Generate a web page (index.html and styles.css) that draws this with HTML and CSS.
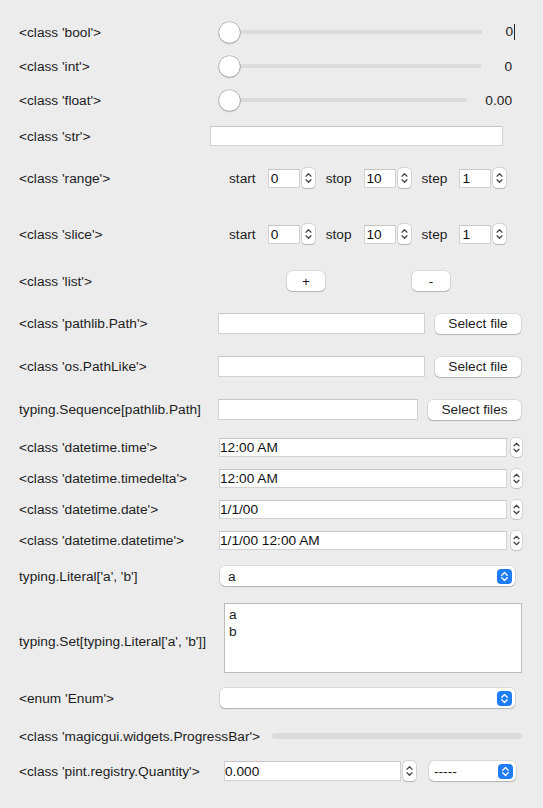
FILE: index.html
```html
<!DOCTYPE html>
<html>
<head>
<meta charset="utf-8">
<title>magicgui widgets</title>
<link rel="stylesheet" href="styles.css">
</head>
<body>
<main class="form">
  <section class="group sliders">
    <div class="row h22">
      <span class="label">&lt;class 'bool'&gt;</span>
      <div class="slider">
        <div class="track"><span class="knob"></span></div>
        <span class="value">0<i class="caret"></i></span>
      </div>
    </div>
    <div class="row h22">
      <span class="label">&lt;class 'int'&gt;</span>
      <div class="slider">
        <div class="track"><span class="knob"></span></div>
        <span class="value">0</span>
      </div>
    </div>
    <div class="row h22">
      <span class="label">&lt;class 'float'&gt;</span>
      <div class="slider">
        <div class="track"><span class="knob"></span></div>
        <span class="value wide">0.00</span>
      </div>
    </div>
    <div class="row m-str">
      <span class="label">&lt;class 'str'&gt;</span>
      <span class="field str"></span>
    </div>
  </section>

  <div class="row m-range">
    <span class="label">&lt;class 'range'&gt;</span>
    <div class="spins">
      <span class="pname">start</span><span class="field spin">0</span><span class="stepper"><svg width="13" height="20" viewBox="0 0 13 20"><path d="M4 8.2 L6.5 5.7 L9 8.2 M4 11.8 L6.5 14.3 L9 11.8"/></svg></span>
      <span class="pname">stop</span><span class="field spin">10</span><span class="stepper"><svg width="13" height="20" viewBox="0 0 13 20"><path d="M4 8.2 L6.5 5.7 L9 8.2 M4 11.8 L6.5 14.3 L9 11.8"/></svg></span>
      <span class="pname">step</span><span class="field spin">1</span><span class="stepper"><svg width="13" height="20" viewBox="0 0 13 20"><path d="M4 8.2 L6.5 5.7 L9 8.2 M4 11.8 L6.5 14.3 L9 11.8"/></svg></span>
    </div>
  </div>

  <div class="row m-slice">
    <span class="label">&lt;class 'slice'&gt;</span>
    <div class="spins">
      <span class="pname">start</span><span class="field spin">0</span><span class="stepper"><svg width="13" height="20" viewBox="0 0 13 20"><path d="M4 8.2 L6.5 5.7 L9 8.2 M4 11.8 L6.5 14.3 L9 11.8"/></svg></span>
      <span class="pname">stop</span><span class="field spin">10</span><span class="stepper"><svg width="13" height="20" viewBox="0 0 13 20"><path d="M4 8.2 L6.5 5.7 L9 8.2 M4 11.8 L6.5 14.3 L9 11.8"/></svg></span>
      <span class="pname">step</span><span class="field spin">1</span><span class="stepper"><svg width="13" height="20" viewBox="0 0 13 20"><path d="M4 8.2 L6.5 5.7 L9 8.2 M4 11.8 L6.5 14.3 L9 11.8"/></svg></span>
    </div>
  </div>

  <div class="row m-list">
    <span class="label">&lt;class 'list'&gt;</span>
    <div class="listbtns">
      <button class="btn small">+</button>
      <button class="btn small">-</button>
    </div>
  </div>

  <div class="row h21 m-path1">
    <span class="label">&lt;class 'pathlib.Path'&gt;</span>
    <span class="field path"></span>
    <button class="btn file">Select file</button>
  </div>
  <div class="row h21 m-path2">
    <span class="label">&lt;class 'os.PathLike'&gt;</span>
    <span class="field path"></span>
    <button class="btn file">Select file</button>
  </div>
  <div class="row h21 m-path3">
    <span class="label">typing.Sequence[pathlib.Path]</span>
    <span class="field path seq"></span>
    <button class="btn file files">Select files</button>
  </div>

  <section class="group dates">
    <div class="row h19">
      <span class="label">&lt;class 'datetime.time'&gt;</span>
      <span class="field dt">12:00 AM</span>
      <span class="stepper thin"><svg width="11" height="19" viewBox="0 0 11 19"><path d="M3 7.8 L5.5 5.3 L8 7.8 M3 11.2 L5.5 13.7 L8 11.2"/></svg></span>
    </div>
    <div class="row h19">
      <span class="label">&lt;class 'datetime.timedelta'&gt;</span>
      <span class="field dt">12:00 AM</span>
      <span class="stepper thin"><svg width="11" height="19" viewBox="0 0 11 19"><path d="M3 7.8 L5.5 5.3 L8 7.8 M3 11.2 L5.5 13.7 L8 11.2"/></svg></span>
    </div>
    <div class="row h19">
      <span class="label">&lt;class 'datetime.date'&gt;</span>
      <span class="field dt">1/1/00</span>
      <span class="stepper thin"><svg width="11" height="19" viewBox="0 0 11 19"><path d="M3 7.8 L5.5 5.3 L8 7.8 M3 11.2 L5.5 13.7 L8 11.2"/></svg></span>
    </div>
    <div class="row h19">
      <span class="label">&lt;class 'datetime.datetime'&gt;</span>
      <span class="field dt">1/1/00 12:00 AM</span>
      <span class="stepper thin"><svg width="11" height="19" viewBox="0 0 11 19"><path d="M3 7.8 L5.5 5.3 L8 7.8 M3 11.2 L5.5 13.7 L8 11.2"/></svg></span>
    </div>
  </section>

  <div class="row m-literal">
    <span class="label">typing.Literal['a', 'b']</span>
    <div class="combo wide">
      <span class="ctext">a</span>
      <svg class="cbtn" width="15" height="15" viewBox="0 0 15 15"><rect width="15" height="15" rx="4"/><path d="M4.8 6.2 L7.5 3.6 L10.2 6.2 M4.8 8.8 L7.5 11.4 L10.2 8.8"/></svg>
    </div>
  </div>

  <div class="row m-set">
    <span class="label setlabel">typing.Set[typing.Literal['a', 'b']]</span>
    <div class="listbox">
      <div class="item">a</div>
      <div class="item">b</div>
    </div>
  </div>

  <div class="row m-enum">
    <span class="label">&lt;enum 'Enum'&gt;</span>
    <div class="combo wide">
      <span class="ctext"></span>
      <svg class="cbtn" width="15" height="15" viewBox="0 0 15 15"><rect width="15" height="15" rx="4"/><path d="M4.8 6.2 L7.5 3.6 L10.2 6.2 M4.8 8.8 L7.5 11.4 L10.2 8.8"/></svg>
    </div>
  </div>

  <div class="row m-progress">
    <span class="label auto">&lt;class 'magicgui.widgets.ProgressBar'&gt;</span>
    <div class="progress"></div>
  </div>

  <div class="row m-qty">
    <span class="label">&lt;class 'pint.registry.Quantity'&gt;</span>
    <span class="field qty">0.000</span>
    <span class="stepper"><svg width="13" height="20" viewBox="0 0 13 20"><path d="M4 8.2 L6.5 5.7 L9 8.2 M4 11.8 L6.5 14.3 L9 11.8"/></svg></span>
    <div class="combo unit">
      <span class="ctext">-----</span>
      <svg class="cbtn" width="15" height="15" viewBox="0 0 15 15"><rect width="15" height="15" rx="4"/><path d="M4.8 6.2 L7.5 3.6 L10.2 6.2 M4.8 8.8 L7.5 11.4 L10.2 8.8"/></svg>
    </div>
  </div>
</main>
</body>
</html>
```

FILE: styles.css
```css
html, body {
  margin: 0;
  padding: 0;
}
body {
  background: #ececec;
  font-family: "Liberation Sans", Arial, sans-serif;
  font-size: 13.7px;
  color: #1c1c1c;
  width: 543px;
  height: 808px;
  overflow: hidden;
}
.form {
  display: flex;
  flex-direction: column;
  padding: 21px 21px 0 19px;
}
.group {
  display: flex;
  flex-direction: column;
}
.group.sliders { gap: 12px; }
.group.dates { gap: 12px; margin-top: 18px; }

.row {
  display: flex;
  align-items: center;
  height: 20px;
}
.row.h22 { height: 22px; }
.row.h21 { height: 21px; }
.row.h19 { height: 19px; }
.label {
  width: 191px;
  flex: none;
  white-space: nowrap;
}
.label.auto { width: auto; }

.m-str { margin-top: 3px; }
.m-range { margin-top: 22px; }
.m-slice { margin-top: 36px; }
.m-list { margin-top: 27px; }
.m-path1 { margin-top: 22px; }
.m-path2 { margin-top: 22px; }
.m-path3 { margin-top: 22px; }
.m-literal { margin-top: 16px; }
.m-set { margin-top: 17px; height: 70px; }
.m-enum { margin-top: 15px; }
.m-progress { margin-top: 18px; }
.m-qty { margin-top: 15px; }

/* sliders */
.slider {
  flex: 1;
  display: flex;
  align-items: center;
  margin-left: 9px;
  height: 22px;
}
.track {
  flex: 1;
  height: 4px;
  margin-left: 10px;
  background: #dcdcdc;
  border-radius: 2px;
  position: relative;
}
.knob {
  position: absolute;
  left: -10px;
  top: -8.5px;
  width: 21px;
  height: 21px;
  border-radius: 50%;
  background: #fff;
  box-shadow: 0 0 0 0.6px rgba(0, 0, 0, 0.28), 0 0.8px 1.5px rgba(0, 0, 0, 0.22);
}
.value {
  width: 40px;
  text-align: right;
  padding-right: 10px;
  box-sizing: border-box;
}
.value.wide { width: 55px; }
.caret {
  display: inline-block;
  width: 1px;
  height: 16px;
  background: #222;
  vertical-align: middle;
  margin-left: 1px;
  margin-right: -3px;
}

/* text fields */
.field {
  display: flex;
  align-items: center;
  box-sizing: border-box;
  height: 20px;
  background: #fff;
  border: 1px solid #d2d2d2;
  border-top-color: #c6c6c6;
  flex: none;
  padding-left: 1px;
  color: #111;
}
.field.str { width: 293px; }
.field.path { width: 207px; margin-left: 8px; height: 21px; }
.field.path.seq { width: 200px; }
.field.dt { width: 288px; height: 19px; margin-left: 9px; padding-left: 0; }
.field.qty { width: 177px; margin-left: 14px; padding-left: 0; }

/* spin boxes */
.spins {
  display: flex;
  align-items: center;
  margin-left: 19px;
}
.pname {
  margin: 0 12px 0 11px;
}
.pname:first-child { margin-left: 0; }
.field.spin {
  width: 32px;
  height: 19px;
  padding-left: 2px;
}
.stepper {
  flex: none;
  display: block;
  width: 13px;
  height: 20px;
  margin-left: 2px;
  background: #fff;
  border-radius: 4px;
  box-shadow: 0 0 0 0.5px rgba(0, 0, 0, 0.18), 0 0.5px 1px rgba(0, 0, 0, 0.18);
}
.stepper.thin {
  width: 11px;
  height: 19px;
  margin-left: 4px;
}
.stepper svg {
  display: block;
}
.stepper path {
  fill: none;
  stroke: #444;
  stroke-width: 1.25;
  stroke-linecap: round;
  stroke-linejoin: round;
}

/* buttons */
.btn {
  font: inherit;
  color: #1e1e1e;
  background: #fff;
  border: none;
  border-radius: 5px;
  height: 20px;
  padding: 0;
  display: flex;
  align-items: center;
  justify-content: center;
  box-shadow: 0 0 0 0.5px rgba(0, 0, 0, 0.16), 0 1px 1.2px rgba(0, 0, 0, 0.18);
  flex: none;
}
.listbtns {
  display: flex;
  margin-left: 77px;
  gap: 87px;
}
.btn.small { width: 38px; }
.btn.file { width: 86px; margin-left: 10px; height: 20px; }
.btn.file.files { width: 93px; }

/* combo boxes */
.combo {
  display: flex;
  align-items: center;
  justify-content: space-between;
  box-sizing: border-box;
  height: 20px;
  background: #fff;
  border-radius: 5px;
  box-shadow: 0 0 0 0.5px rgba(0, 0, 0, 0.16), 0 1px 1.2px rgba(0, 0, 0, 0.18);
  padding: 0 3px 0 8px;
  flex: none;
}
.combo.wide { width: 295px; margin-left: 10px; }
.combo.unit { width: 87px; margin-left: 13px; padding-left: 5px; }
.cbtn rect { fill: #1d7cf6; }
.cbtn path {
  fill: none;
  stroke: #fff;
  stroke-width: 1.4;
  stroke-linecap: round;
  stroke-linejoin: round;
}

/* list box */
.listbox {
  box-sizing: border-box;
  width: 298px;
  height: 70px;
  margin-left: 14px;
  background: #fff;
  border: 1px solid #bcbcbc;
  padding: 2px 0 0 4px;
}
.item { line-height: 17px; }
.setlabel { padding-top: 6px; }

/* progress bar */
.progress {
  flex: 1;
  height: 6px;
  margin-left: 12px;
  background: #dcdcdc;
  border-radius: 3px;
}
```
